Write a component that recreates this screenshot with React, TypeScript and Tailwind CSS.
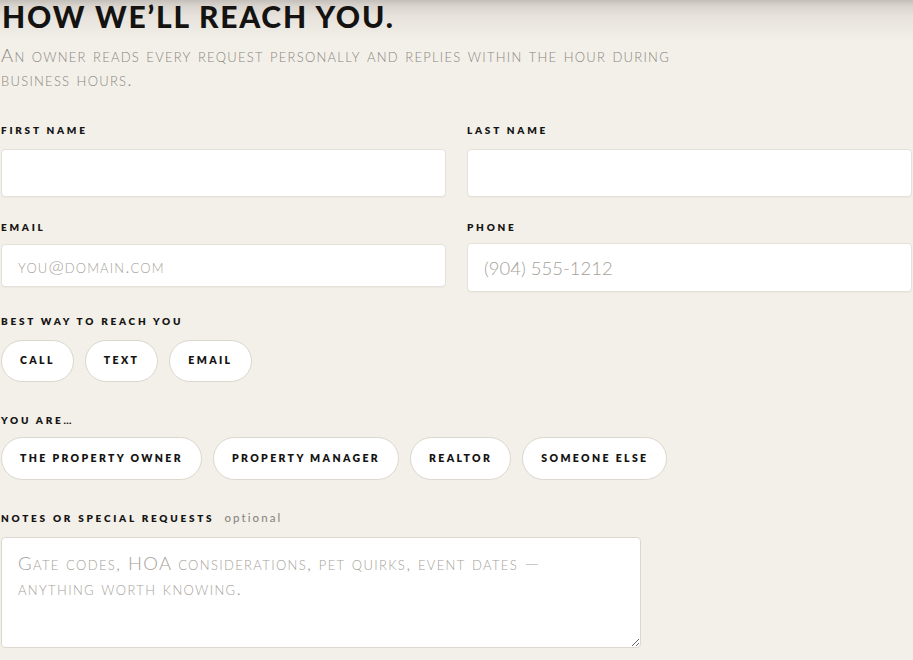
import React from "react";

const display = "font-['Lato','Noto_Sans',sans-serif]";
const body = "font-['Lato','Noto_Sans',sans-serif] font-light [font-variant:small-caps]";

function Label({ children, extra }: { children: React.ReactNode; extra?: string }) {
  return (
    <div className={`${display} flex items-baseline text-[10px] leading-[12px] font-extrabold uppercase tracking-[0.275em] text-[#151412]`}>
      <span>{children}</span>
      {extra ? (
        <span className="ml-[10px] normal-case font-medium tracking-[0.18em] text-[11.5px] text-[#8c8781]">{extra}</span>
      ) : null}
    </div>
  );
}

function Field({
  label,
  placeholder,
  height,
  gap,
  spacing = "tracking-normal",
}: {
  label: string;
  placeholder?: string;
  height: string;
  gap: string;
  spacing?: string;
}) {
  return (
    <div className={`flex flex-col ${gap}`}>
      <Label>{label}</Label>
      <input
        className={`${body} ${height} ${spacing} w-full rounded-[4px] border border-[#e5e1d9] bg-white px-[16px] text-[18.5px] text-[#3a3733] outline-none placeholder:text-[#a6a19a] shadow-[0_1px_1px_rgba(0,0,0,0.03)]`}
        placeholder={placeholder}
      />
    </div>
  );
}

function Pill({ children, h }: { children: React.ReactNode; h: string }) {
  return (
    <button
      type="button"
      className={`${display} ${h} rounded-full border border-[#dcd7cd] bg-white px-[18px] text-[10.5px] font-extrabold uppercase tracking-[0.225em] text-[#151412]`}
    >
      {children}
    </button>
  );
}

export default function App() {
  return (
    <div className="relative min-h-screen w-full bg-[#f3f0ea] overflow-hidden">
      <div className="pointer-events-none absolute inset-x-0 top-0 h-[42px] bg-[linear-gradient(to_bottom,#c4bfb8_0px,#d9d5ce_6px,#e7e3dc_16px,#f3f0ea_42px)]" />

      <div className="relative flex flex-col px-[1px]">
        <h2 className={`${display} pl-[1px] pt-[1px] text-[30px] leading-[30px] font-black uppercase tracking-[0.06em] text-[#141311]`}>
          How we’ll reach you.
        </h2>

        <p className={`${body} mt-[12px] max-w-[700px] text-[18.5px] leading-[24px] tracking-[0.068em] text-[#8b8680]`}>
          An owner reads every request personally and replies within the hour during business hours.
        </p>

        <div className="mt-[33px] grid grid-cols-2 gap-x-[21px]">
          <Field label="First name" height="h-[48px]" gap="gap-[13px]" />
          <Field label="Last name" height="h-[48px]" gap="gap-[13px]" />
        </div>

        <div className="mt-[24px] grid grid-cols-2 items-start gap-x-[21px]">
          <Field
            label="Email"
            placeholder="you@domain.com"
            height="h-[43px]"
            gap="gap-[11px]"
            spacing="tracking-[0.06em]"
          />
          <Field label="Phone" placeholder="(904) 555-1212" height="h-[49px]" gap="gap-[10px]" />
        </div>

        <div className="mt-[23px] flex flex-col gap-[13px]">
          <Label>Best way to reach you</Label>
          <div className="flex gap-[11px]">
            <Pill h="h-[42px]">Call</Pill>
            <Pill h="h-[42px]">Text</Pill>
            <Pill h="h-[42px]">Email</Pill>
          </div>
        </div>

        <div className="mt-[32px] flex flex-col gap-[11px]">
          <Label>You are…</Label>
          <div className="flex gap-[11px]">
            <Pill h="h-[43px]">The property owner</Pill>
            <Pill h="h-[43px]">Property manager</Pill>
            <Pill h="h-[43px]">Realtor</Pill>
            <Pill h="h-[43px]">Someone else</Pill>
          </div>
        </div>

        <div className="mt-[32px] flex flex-col gap-[13px]">
          <Label extra="optional">Notes or special requests</Label>
          <textarea
            className={`${body} h-[111px] w-[640px] rounded-[4px] border border-[#dcd8d0] bg-white pl-[16px] pr-[70px] pt-[13px] text-[18.5px] leading-[25px] tracking-[0.073em] text-[#3a3733] outline-none placeholder:text-[#a6a19a]`}
            placeholder="Gate codes, HOA considerations, pet quirks, event dates — anything worth knowing."
          />
        </div>
      </div>
    </div>
  );
}
